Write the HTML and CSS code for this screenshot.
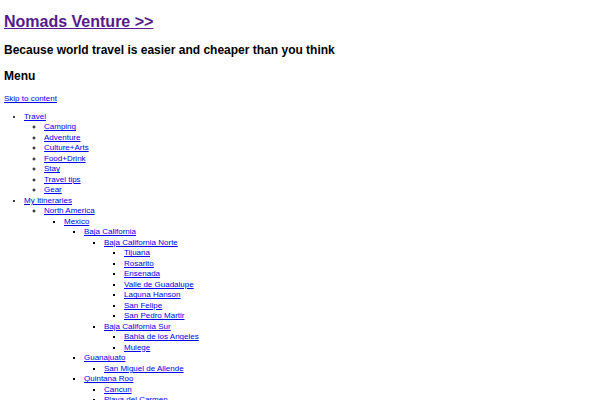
FILE: index.html
```html
<!DOCTYPE html>
<html>
<head>
<meta charset="utf-8">
<title>Nomads Venture</title>
<link rel="stylesheet" href="styles.css">
</head>
<body>
<header class="site-header">
  <h1 class="site-title"><a class="visited" href="#">Nomads Venture &gt;&gt;</a></h1>
  <h2 class="site-desc">Because world travel is easier and cheaper than you think</h2>
</header>
<nav class="site-nav">
  <h2 class="menu-title">Menu</h2>
  <a class="skip" href="#">Skip to content</a>
  <ul class="menu">
    <li><a href="#">Travel</a>
      <ul>
        <li><a href="#">Camping</a></li>
        <li><a href="#">Adventure</a></li>
        <li><a href="#">Culture+Arts</a></li>
        <li><a href="#">Food+Drink</a></li>
        <li><a href="#">Stay</a></li>
        <li><a href="#">Travel tips</a></li>
        <li><a href="#">Gear</a></li>
      </ul>
    </li>
    <li><a href="#">My Itineraries</a>
      <ul>
        <li><a href="#">North America</a>
          <ul>
            <li><a href="#">Mexico</a>
              <ul>
                <li><a href="#">Baja California</a>
                  <ul>
                    <li><a href="#">Baja California Norte</a>
                      <ul>
                        <li><a href="#">Tijuana</a></li>
                        <li><a href="#">Rosarito</a></li>
                        <li><a href="#">Ensenada</a></li>
                        <li><a href="#">Valle de Guadalupe</a></li>
                        <li><a href="#">Laguna Hanson</a></li>
                        <li><a href="#">San Felipe</a></li>
                        <li><a href="#">San Pedro Martir</a></li>
                      </ul>
                    </li>
                    <li><a href="#">Baja California Sur</a>
                      <ul>
                        <li><a href="#">Bahia de los Angeles</a></li>
                        <li><a href="#">Mulege</a></li>
                      </ul>
                    </li>
                  </ul>
                </li>
                <li><a href="#">Guanajuato</a>
                  <ul>
                    <li><a href="#">San Miguel de Allende</a></li>
                  </ul>
                </li>
                <li><a href="#">Quintana Roo</a>
                  <ul>
                    <li><a href="#">Cancun</a></li>
                    <li><a href="#">Playa del Carmen</a></li>
                    <li><a href="#">Tulum</a></li>
                  </ul>
                </li>
              </ul>
            </li>
          </ul>
        </li>
      </ul>
    </li>
  </ul>
</nav>
</body>
</html>
```
FILE: styles.css
```css
html {
  background: #fff;
}
body {
  margin: 4px;
  font-family: "Liberation Sans", Arial, sans-serif;
  font-size: 8px;
  line-height: 1.3;
  color: #000;
}
a {
  color: #0000ee;
}
a.visited {
  color: #551a8b;
}
.site-title {
  font-size: 16px;
  font-weight: bold;
  margin: 7.7px 0 10.7px;
  line-height: 1.3;
}
.site-desc,
.menu-title {
  font-size: 12px;
  font-weight: bold;
  margin: 10px 0;
  line-height: 1.3;
}
.site-title + .site-desc {
  margin-top: 10.7px;
}
.skip {
  display: inline-block;
}
.menu {
  margin: 7px 0 8px;
  padding-left: 20px;
}
.menu ul {
  margin: 0;
  padding-left: 20px;
}
.menu li {
  line-height: 10.5px;
}
```
